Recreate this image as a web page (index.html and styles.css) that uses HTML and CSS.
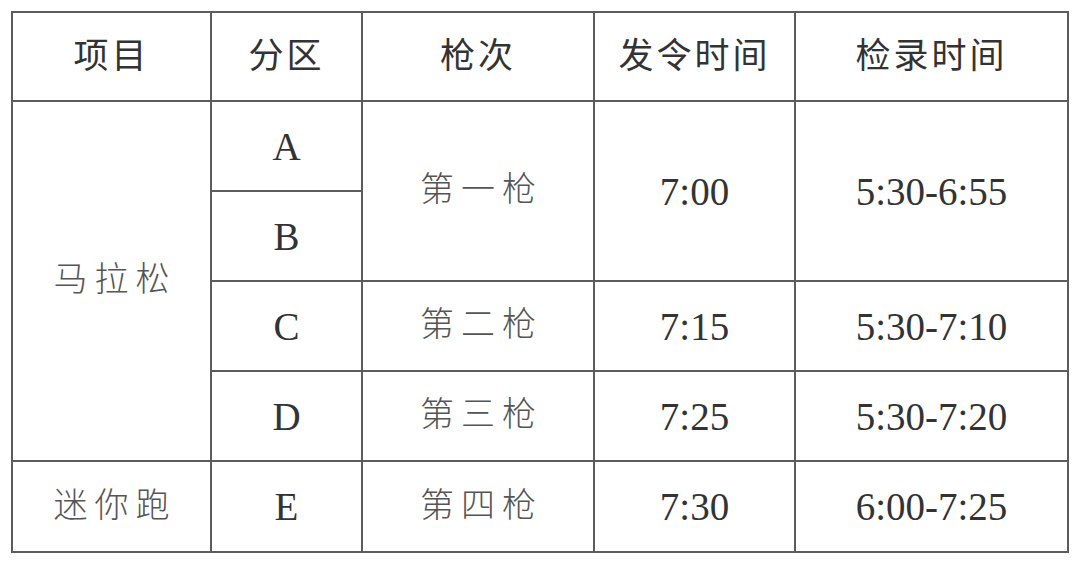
FILE: index.html
```html
<!DOCTYPE html>
<html lang="zh-CN">
<head>
<meta charset="utf-8">
<title>分区发令时间</title>
<link rel="stylesheet" href="styles.css">
</head>
<body>
<table class="schedule">
  <colgroup>
    <col class="c1"><col class="c2"><col class="c3"><col class="c4"><col class="c5">
  </colgroup>
  <thead>
    <tr class="head">
      <th>项目</th>
      <th>分区</th>
      <th>枪次</th>
      <th>发令时间</th>
      <th>检录时间</th>
    </tr>
  </thead>
  <tbody>
    <tr class="row">
      <td rowspan="4" class="zh">马拉松</td>
      <td class="lat">A</td>
      <td rowspan="2" class="zh">第一枪</td>
      <td rowspan="2" class="lat">7:00</td>
      <td rowspan="2" class="lat">5:30-6:55</td>
    </tr>
    <tr class="row">
      <td class="lat">B</td>
    </tr>
    <tr class="row">
      <td class="lat">C</td>
      <td class="zh">第二枪</td>
      <td class="lat">7:15</td>
      <td class="lat">5:30-7:10</td>
    </tr>
    <tr class="row">
      <td class="lat">D</td>
      <td class="zh">第三枪</td>
      <td class="lat">7:25</td>
      <td class="lat">5:30-7:20</td>
    </tr>
    <tr class="row last">
      <td class="zh">迷你跑</td>
      <td class="lat">E</td>
      <td class="zh">第四枪</td>
      <td class="lat">7:30</td>
      <td class="lat">6:00-7:25</td>
    </tr>
  </tbody>
</table>
</body>
</html>
```
FILE: styles.css
```css
html, body {
  margin: 0;
  padding: 0;
  background: #ffffff;
}

body {
  padding: 11px 0 0 11px;
}

.schedule {
  border-collapse: collapse;
  table-layout: fixed;
  width: 1056px;
}

.c1 { width: 199px; }
.c2 { width: 151px; }
.c3 { width: 232px; }
.c4 { width: 201px; }
.c5 { width: 273px; }

.schedule th,
.schedule td {
  border: 2px solid #5c5c5c;
  padding: 0;
  text-align: center;
  vertical-align: middle;
}

.head { height: 89px; }
.row { height: 90px; }
.row.last { height: 91px; }

.schedule th {
  font-family: "Noto Sans CJK SC", sans-serif;
  font-weight: 400;
  font-size: 35px;
  letter-spacing: 3px;
  padding: 0 0 8px 0;
  color: #333333;
}

.schedule .zh {
  font-family: "Noto Sans CJK SC", sans-serif;
  font-weight: 300;
  font-size: 34px;
  letter-spacing: 7px;
  padding: 0 0 9px 7px;
  color: #555555;
}

.lat {
  font-family: "Liberation Serif", "Times New Roman", serif;
  font-size: 39px;
  color: #333333;
}
```
